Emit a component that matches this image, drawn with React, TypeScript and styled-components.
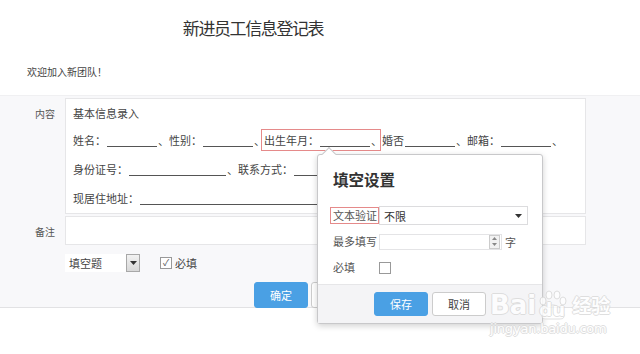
import React from "react";
import styled, { createGlobalStyle } from "styled-components";

const GlobalStyle = createGlobalStyle`
  body {
    margin: 0;
    background: #fff;
    font-family: "Noto Sans CJK SC", "Microsoft YaHei", sans-serif;
    color: #444;
  }
`;

const Page = styled.div`
  position: relative;
  width: 640px;
  height: 354px;
  overflow: hidden;
`;

const Title = styled.h1`
  margin: 0;
  padding: 15px 134px 0 0;
  height: 34px;
  text-align: center;
  font-size: 17px;
  letter-spacing: -1.4px;
  font-weight: normal;
  line-height: 26px;
  color: #333;
`;

const Welcome = styled.div`
  padding: 14px 0 0 27px;
  height: 32px;
  font-size: 10px;
  line-height: 18px;
  color: #444;
`;

// 灰色表单区域
const Panel = styled.div`
  background: #f8f8fa;
  border-top: 1px solid #f0f0f2;
  border-bottom: 1px solid #e2e2e4;
  padding: 2px 0 2px;
  height: 213px;
  box-sizing: border-box;
`;

const FieldRow = styled.div<{ gap?: number }>`
  display: flex;
  align-items: flex-start;
  margin-top: ${(p) => p.gap ?? 0}px;
`;

const Label = styled.div<{ top: number }>`
  width: 55px;
  padding-right: 10px;
  padding-top: ${(p) => p.top}px;
  text-align: right;
  font-size: 10px;
  line-height: 16px;
  color: #555;
`;

const ContentBox = styled.div`
  width: 521px;
  box-sizing: border-box;
  background: #fff;
  border: 1px solid #e6e6e8;
  padding: 1px 7px 0;
  font-size: 11px;
  color: #444;
`;

const BoxHead = styled.div`
  line-height: 26px;
`;

const Line = styled.div`
  line-height: 29px;
  white-space: nowrap;
`;

const Blank = styled.span<{ w: number }>`
  display: inline-block;
  width: ${(p) => p.w}px;
  height: 12px;
  border-bottom: 1px solid #555;
  margin: 0 1px;
  vertical-align: -2px;
`;

// 窄的顿号（只占半个字宽）
const Sep = styled.span`
  letter-spacing: -4px;
`;

const Mark = styled.span`
  border: 1px solid #e58a8a;
  padding: 2px 2px 2px 2px;
  margin-right: 1px;
`;

const NoteBox = styled.div`
  width: 521px;
  height: 29px;
  box-sizing: border-box;
  background: #fff;
  border: 1px solid #e6e6e8;
`;

const OptionRow = styled.div`
  display: flex;
  align-items: center;
  margin: 9px 0 0 65px;
  height: 18px;
  gap: 20px;
`;

const TypeSelect = styled.div`
  display: flex;
  width: 75px;
  height: 18px;
  background: #fff;
  font-size: 11px;
  line-height: 18px;
  color: #444;
`;

const SelectText = styled.span`
  flex: 1;
  padding-left: 4px;
`;

const SelectBtn = styled.span`
  width: 12px;
  border: 1px solid #a8a8a8;
  background: linear-gradient(#f2f2f2, #d8d8d8);
  display: flex;
  align-items: center;
  justify-content: center;
`;

const Check = styled.span`
  display: inline-flex;
  align-items: center;
  justify-content: center;
  width: 10px;
  height: 10px;
  border: 1px solid #999;
  background: #fff;
  font-size: 9px;
  line-height: 10px;
  color: #555;
`;

const CheckWrap = styled.label`
  display: flex;
  align-items: center;
  gap: 3px;
  font-size: 11px;
  color: #444;
`;

const ButtonRow = styled.div<{ left: number; top: number }>`
  display: flex;
  gap: 3px;
  margin: ${(p) => p.top}px 0 0 ${(p) => p.left}px;
`;

const Button = styled.button<{ primary?: boolean; h?: number }>`
  width: 54px;
  height: ${(p) => p.h ?? 26}px;
  border-radius: 3px;
  border: 1px solid ${(p) => (p.primary ? "#4aa0e4" : "#ccc")};
  background: ${(p) => (p.primary ? "#4aa0e4" : "#fff")};
  color: ${(p) => (p.primary ? "#fff" : "#444")};
  font-family: inherit;
  font-size: 11px;
  padding: 0;
`;

// 填空设置 弹出层
const Popup = styled.div`
  position: absolute;
  left: 317px;
  top: 154px;
  width: 226px;
  height: 170px;
  box-sizing: border-box;
  background: #fff;
  border: 1px solid #c8c8ca;
  border-radius: 3px;
  box-shadow: 0 2px 6px rgba(0, 0, 0, 0.18);
  display: flex;
  flex-direction: column;
`;

const Arrow = styled.span`
  position: absolute;
  left: 6px;
  top: -6px;
  width: 9px;
  height: 9px;
  background: #fff;
  border-left: 1px solid #c8c8ca;
  border-top: 1px solid #c8c8ca;
  transform: rotate(45deg);
`;

const PopupBody = styled.div`
  flex: 1;
  padding: 12px 14px 0 12px;
`;

const PopupTitle = styled.div`
  font-size: 15.5px;
  font-weight: bold;
  line-height: 24px;
  color: #333;
  padding-left: 3px;
  margin-bottom: 15px;
`;

const SetRow = styled.div`
  display: flex;
  align-items: center;
  height: 19px;
  margin-bottom: 7px;
  font-size: 11px;
  color: #555;
`;

const SetLabel = styled.span<{ marked?: boolean }>`
  width: 49px;
  box-sizing: border-box;
  height: 17px;
  line-height: 15px;
  padding-left: 2px;
  white-space: nowrap;
  border: 1px solid ${(p) => (p.marked ? "#e58a8a" : "transparent")};
`;

const SetSelect = styled.div`
  display: flex;
  align-items: center;
  justify-content: space-between;
  width: 149px;
  height: 19px;
  box-sizing: border-box;
  border: 1px solid #dcdcde;
  padding: 0 5px 0 4px;
  color: #333;
`;

const NumInput = styled.div`
  display: flex;
  justify-content: flex-end;
  align-items: center;
  width: 123px;
  height: 16px;
  box-sizing: border-box;
  border: 1px solid #e4e4e6;
  padding-right: 1px;
`;

const Spinner = styled.span`
  width: 9px;
  height: 12px;
  border: 1px solid #ccc;
  background: #f2f2f2;
  display: flex;
  flex-direction: column;
  align-items: center;
  justify-content: space-around;
`;

const Unit = styled.span`
  margin-left: 3px;
`;

const PopupFooter = styled.div`
  height: 40px;
  background: #f4f4f6;
  border-top: 1px solid #e6e6e8;
  display: flex;
  justify-content: center;
  align-items: center;
  gap: 4px;
`;

const Watermark = styled.div`
  position: absolute;
  left: 490px;
  top: 290px;
  color: #fff;
  font-family: "DejaVu Sans", sans-serif;
  text-shadow: -1px 0 #d8d8d8, 1px 0 #d8d8d8, 0 -1px #d8d8d8, 0 1px #d8d8d8;
  opacity: 0.8;
  pointer-events: none;
`;

const MarkMain = styled.div`
  display: flex;
  align-items: flex-end;
  font-size: 26px;
  font-weight: bold;
  line-height: 30px;
`;

const MarkCn = styled.span`
  font-family: "Noto Sans CJK SC", sans-serif;
  font-size: 19px;
  margin-left: 2px;
`;

const MarkUrl = styled.div`
  font-size: 13px;
  line-height: 18px;
  letter-spacing: -0.2px;
`;

const Paw = styled.span`
  position: relative;
  display: inline-block;
  width: 34px;
  height: 30px;
`;

const PawText = styled.span`
  position: absolute;
  left: 3px;
  bottom: 0;
  font-size: 18px;
  line-height: 20px;
`;

const Tri = () => (
  <svg width="7" height="4" viewBox="0 0 7 4">
    <path d="M0 0h7L3.5 4z" fill="#333" />
  </svg>
);

export default function App() {
  return (
    <Page>
      <GlobalStyle />
      <Title>新进员工信息登记表</Title>
      <Welcome>欢迎加入新团队！</Welcome>
      <Panel>
        <FieldRow>
          <Label top={8}>内容</Label>
          <ContentBox>
            <BoxHead>基本信息录入</BoxHead>
            <Line>
              姓名：<Blank w={50} />、性别：<Blank w={50} />
              <Sep>、</Sep>
              <Mark>
                出生年月：<Blank w={50} />
                <Sep>、</Sep>
              </Mark>
              婚否<Blank w={50} />、邮箱：<Blank w={50} />、
            </Line>
            <Line>
              身份证号：<Blank w={97} />、联系方式：<Blank w={80} />
            </Line>
            <Line>
              现居住地址：<Blank w={300} />
            </Line>
          </ContentBox>
        </FieldRow>
        <FieldRow gap={2}>
          <Label top={8}>备注</Label>
          <NoteBox />
        </FieldRow>
        <OptionRow>
          <TypeSelect>
            <SelectText>填空题</SelectText>
            <SelectBtn>
              <Tri />
            </SelectBtn>
          </TypeSelect>
          <CheckWrap>
            <Check>✓</Check>
            必填
          </CheckWrap>
        </OptionRow>
        <ButtonRow left={254} top={10}>
          <Button primary>确定</Button>
          <Button>取消</Button>
        </ButtonRow>
      </Panel>

      <Popup>
        <Arrow />
        <PopupBody>
          <PopupTitle>填空设置</PopupTitle>
          <SetRow>
            <SetLabel marked>文本验证</SetLabel>
            <SetSelect>
              不限
              <Tri />
            </SetSelect>
          </SetRow>
          <SetRow>
            <SetLabel>最多填写</SetLabel>
            <NumInput>
              <Spinner>
                <svg width="5" height="3" viewBox="0 0 5 3">
                  <path d="M0 3h5L2.5 0z" fill="#888" />
                </svg>
                <svg width="5" height="3" viewBox="0 0 5 3">
                  <path d="M0 0h5L2.5 3z" fill="#888" />
                </svg>
              </Spinner>
            </NumInput>
            <Unit>字</Unit>
          </SetRow>
          <SetRow>
            <SetLabel>必填</SetLabel>
            <Check />
          </SetRow>
        </PopupBody>
        <PopupFooter>
          <Button primary h={24}>
            保存
          </Button>
          <Button h={24}>取消</Button>
        </PopupFooter>
      </Popup>

      <Watermark>
        <MarkMain>
          Bai
          <Paw>
            <svg width="34" height="30" viewBox="0 0 34 30" style={{ position: "absolute", left: 0, top: 0 }}>
              <g fill="#fff" stroke="#d8d8d8" strokeWidth="1">
                <ellipse cx="7" cy="11" rx="3" ry="4" />
                <ellipse cx="13" cy="5" rx="3" ry="4" />
                <ellipse cx="21" cy="5" rx="3" ry="4" />
                <ellipse cx="27" cy="11" rx="3" ry="4" />
                <path d="M6 26c0-6 6-11 11-11s11 5 11 11c0 3-3 3-6 3H12c-3 0-6 0-6-3z" />
              </g>
            </svg>
            <PawText>du</PawText>
          </Paw>
          <MarkCn>经验</MarkCn>
        </MarkMain>
        <MarkUrl>jingyan.baidu.com</MarkUrl>
      </Watermark>
    </Page>
  );
}
